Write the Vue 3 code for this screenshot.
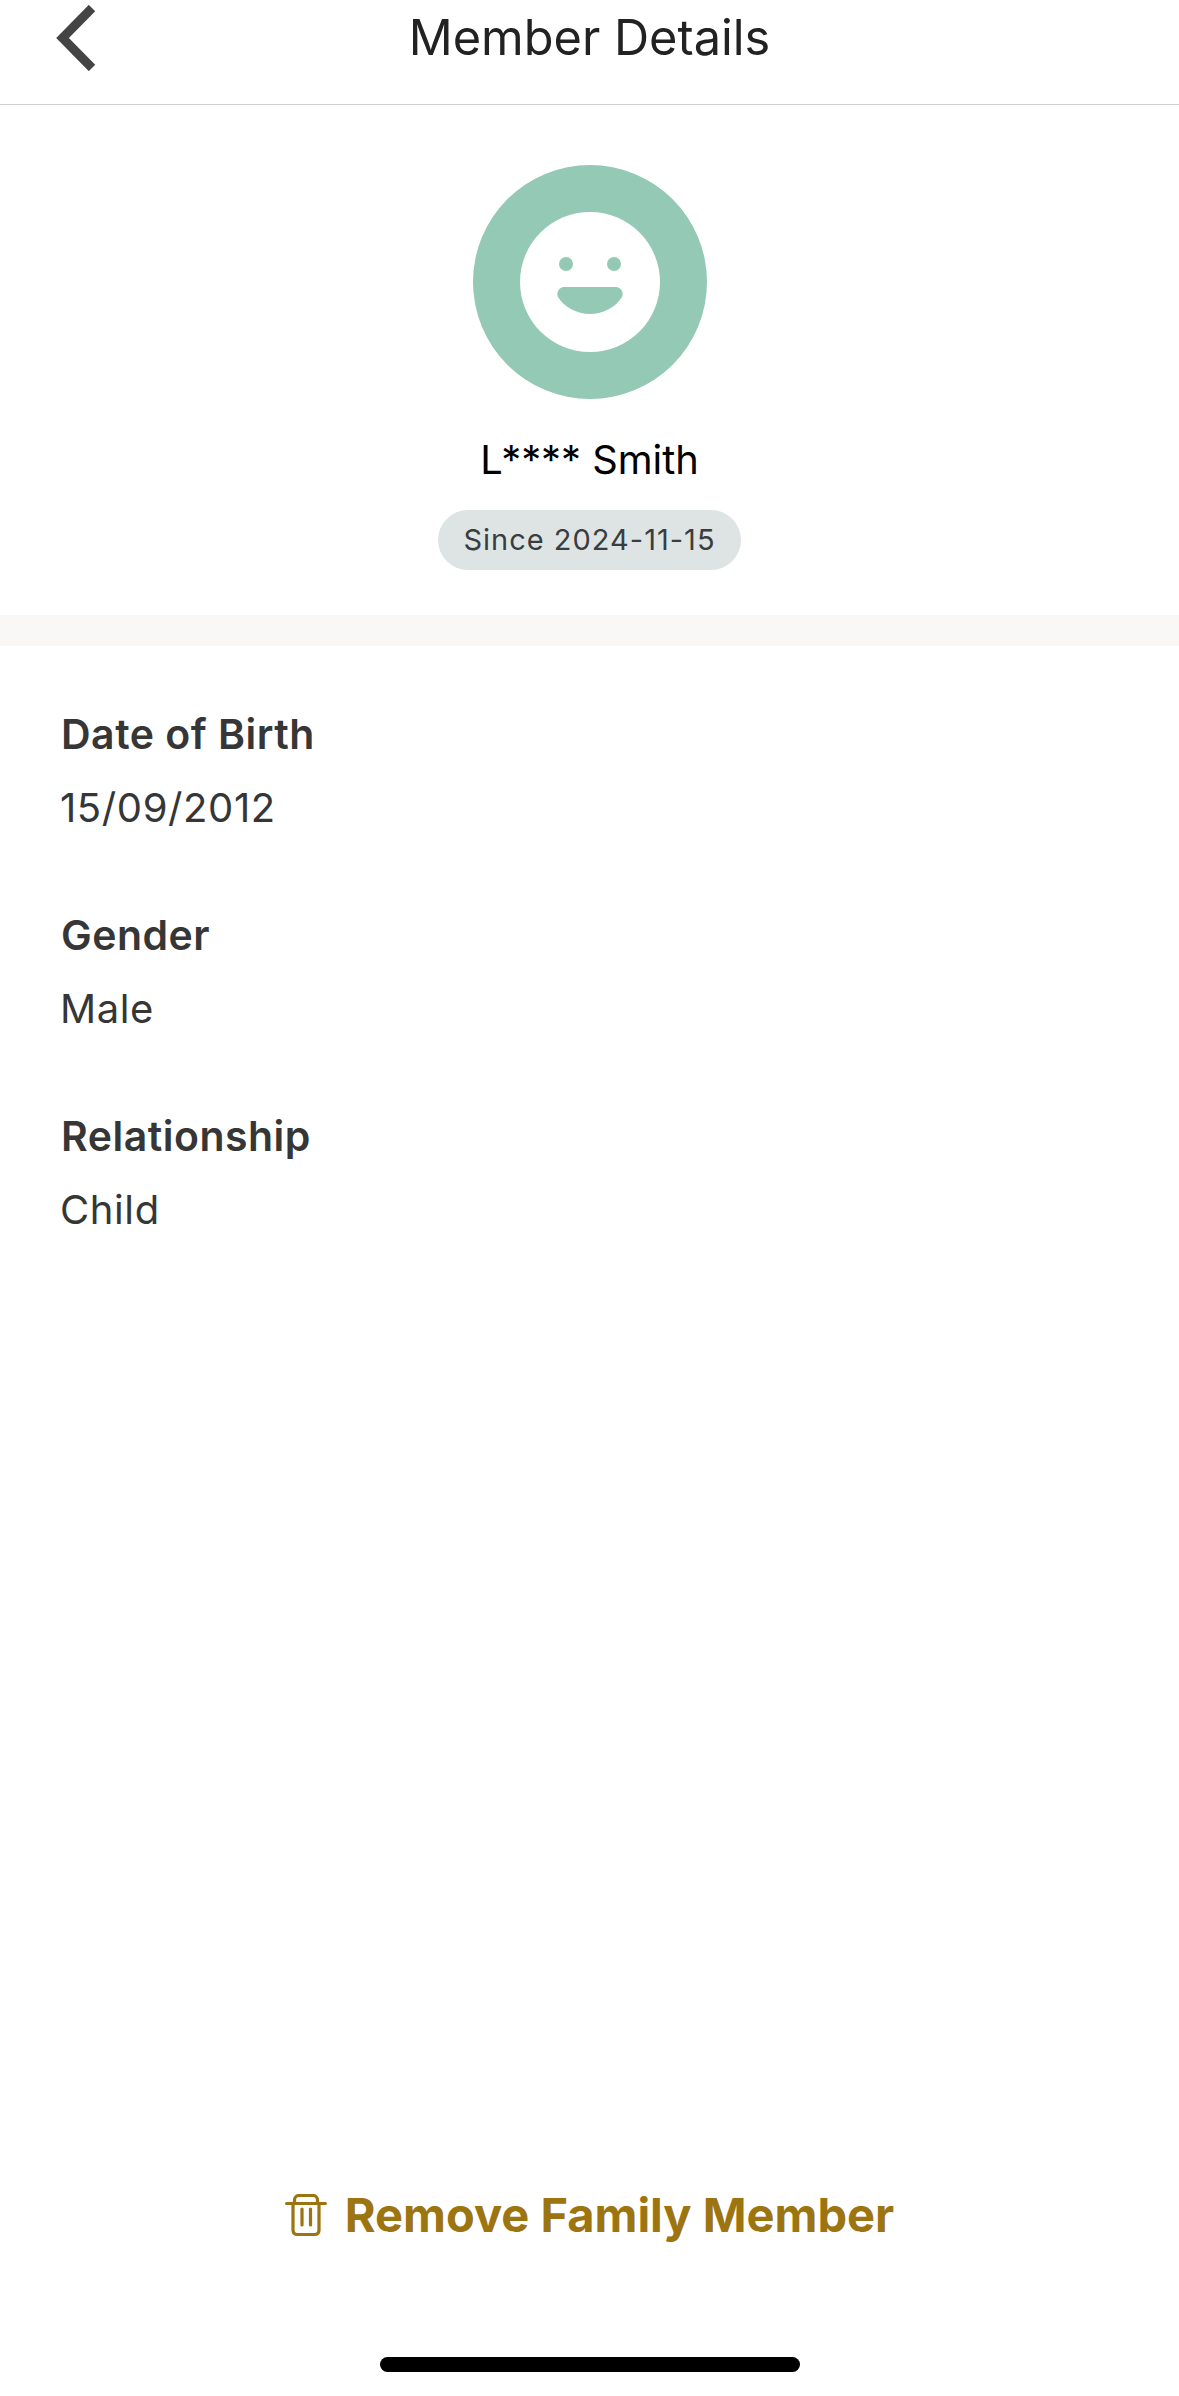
<script setup>
const rows = [
  { label: 'Date of Birth', value: '15/09/2012' },
  { label: 'Gender', value: 'Male' },
  { label: 'Relationship', value: 'Child' },
]
</script>

<template>
  <div class="page">
    <header class="header">
      <svg class="back" width="42" height="66" viewBox="0 0 42 66" fill="none">
        <path d="M37 3 L7.5 33 L37 63" stroke="#444" stroke-width="9" />
      </svg>
      <h1 class="title">Member Details</h1>
    </header>

    <section class="profile">
      <svg class="avatar" width="234" height="234" viewBox="0 0 234 234">
        <circle cx="117" cy="117" r="117" fill="#94c9b5" />
        <circle cx="117" cy="117" r="70" fill="#fff" />
        <circle cx="93" cy="99" r="7" fill="#94c9b5" />
        <circle cx="141" cy="99" r="7" fill="#94c9b5" />
        <path d="M91 122 H143 a7 7 0 0 1 6 10 C143 142 130 149 117 149 C104 149 91 142 85 132 a7 7 0 0 1 6-10Z" fill="#94c9b5" />
      </svg>
      <div class="name">L**** Smith</div>
      <div class="pill">Since 2024-11-15</div>
    </section>

    <div class="band"></div>

    <section class="details">
      <div v-for="r in rows" :key="r.label" class="row">
        <div class="label">{{ r.label }}</div>
        <div class="value">{{ r.value }}</div>
      </div>
    </section>

    <footer class="footer">
      <button class="remove" type="button">
        <svg width="42" height="43" viewBox="0 0 42 43" fill="none" stroke="#9c7410" stroke-width="3.2" stroke-linecap="round" stroke-linejoin="round">
          <path d="M1.6 9.5 H40.4" />
          <path d="M9.5 9 V6 a4.5 4.5 0 0 1 4.5-4.5 H28 a4.5 4.5 0 0 1 4.5 4.5 V9" />
          <path d="M8 10 V36.5 a4 4 0 0 0 4 4 H30 a4 4 0 0 0 4-4 V10" />
          <path d="M17 15 V31 M25.5 15 V31" />
        </svg>
        <span class="remove-text">Remove Family Member</span>
      </button>
      <div class="home-bar"></div>
    </footer>
  </div>
</template>

<style>
html, body { margin: 0; background: #fff; }
</style>

<style scoped>
.page {
  width: 1179px;
  height: 2396px;
  display: flex;
  flex-direction: column;
  background: #fff;
  font-family: Inter, "Liberation Sans", sans-serif;
  overflow: hidden;
}
.header {
  height: 104px;
  border-bottom: 1px solid #cfcfcf;
  display: grid;
  grid-template-columns: 1fr auto 1fr;
  align-items: start;
}
.back { margin: 5px 0 0 55px; }
.title {
  grid-column: 2;
  margin: 0;
  font-size: 48.7px;
  font-weight: 400;
  line-height: 76px;
  color: #222;
}
.profile {
  display: flex;
  flex-direction: column;
  align-items: center;
  padding: 60px 0 45px;
}
.avatar { display: block; }
.name {
  margin-top: 31px;
  font-size: 39.8px;
  line-height: 60px;
  color: #000;
}
.pill {
  margin-top: 20px;
  height: 60px;
  width: 303px;
  border-radius: 30px;
  background: #dee4e4;
  color: #3a3d3f;
  font-size: 29px;
  line-height: 60px;
  text-align: center;
  letter-spacing: 1px;
}
.band { height: 31px; background: #faf8f6; }
.details {
  padding: 58px 61px 0;
  display: flex;
  flex-direction: column;
  gap: 67px;
}
.row { display: flex; flex-direction: column; gap: 14px; }
.label {
  font-size: 41px;
  line-height: 60px;
  font-weight: 600;
  letter-spacing: 0.5px;
  color: #363636;
}
.value {
  margin-left: -1px;
  font-size: 40px;
  line-height: 60px;
  letter-spacing: 0.6px;
  color: #363636;
}
.footer {
  margin-top: auto;
  display: flex;
  flex-direction: column;
  align-items: center;
  padding-bottom: 24px;
}
.remove {
  display: flex;
  align-items: center;
  gap: 18px;
  height: 70px;
  padding: 0;
  border: 0;
  background: none;
  font: inherit;
  font-size: 47px;
  font-weight: 700;
  color: #9c7410;
}
.remove-text { margin-bottom: 2px; }
.home-bar {
  margin-top: 107px;
  width: 420px;
  height: 15px;
  border-radius: 8px;
  background: #000;
}
</style>
